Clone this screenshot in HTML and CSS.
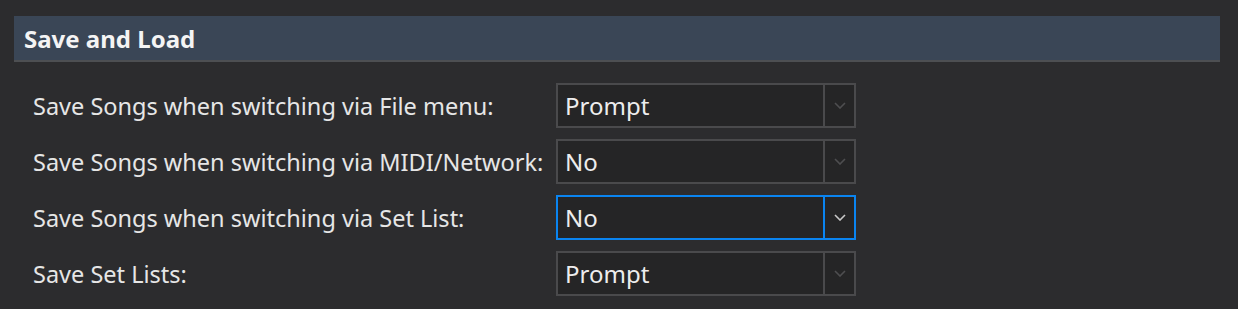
FILE: index.html
```html
<!DOCTYPE html>
<html lang="en">
  <head>
    <meta charset="UTF-8" />
    <meta name="viewport" content="width=device-width, initial-scale=1.0" />
    <title>Save and Load</title>
    <link rel="stylesheet" href="styles.css">
  </head>
  <body>
    <div class="panel">
      <h2 class="section-title">Save and Load</h2>

      <div class="options">
        <label class="option-label">Save Songs when switching via File menu:</label>
        <div class="dropdown">
          <span class="dropdown-value">Prompt</span>
          <span class="dropdown-arrow">
            <svg width="12" height="7" viewBox="0 0 12 7"><path d="M1 1l5 5 5-5" fill="none" stroke="currentColor" stroke-width="1.6"/></svg>
          </span>
        </div>

        <label class="option-label">Save Songs when switching via MIDI/Network:</label>
        <div class="dropdown">
          <span class="dropdown-value">No</span>
          <span class="dropdown-arrow">
            <svg width="12" height="7" viewBox="0 0 12 7"><path d="M1 1l5 5 5-5" fill="none" stroke="currentColor" stroke-width="1.6"/></svg>
          </span>
        </div>

        <label class="option-label">Save Songs when switching via Set List:</label>
        <div class="dropdown focused">
          <span class="dropdown-value">No</span>
          <span class="dropdown-arrow">
            <svg width="12" height="7" viewBox="0 0 12 7"><path d="M1 1l5 5 5-5" fill="none" stroke="currentColor" stroke-width="1.6"/></svg>
          </span>
        </div>

        <label class="option-label">Save Set Lists:</label>
        <div class="dropdown">
          <span class="dropdown-value">Prompt</span>
          <span class="dropdown-arrow">
            <svg width="12" height="7" viewBox="0 0 12 7"><path d="M1 1l5 5 5-5" fill="none" stroke="currentColor" stroke-width="1.6"/></svg>
          </span>
        </div>
      </div>
    </div>
  </body>
</html>
```

FILE: styles.css
```css
body {
  margin: 0;
  background-color: #2c2c2e;
  font-family: "Noto Sans", sans-serif;
  color: #e8e8e8;
}

.panel {
  padding: 16px 18px 0 14px;
}

.section-title {
  margin: 0;
  height: 44px;
  padding-left: 10px;
  display: flex;
  align-items: center;
  background-color: #3a4656;
  border-bottom: 2px solid #4d4f52;
  font-size: 24px;
  font-weight: bold;
  color: #f4f4f4;
}

.options {
  display: grid;
  grid-template-columns: 523px 300px;
  grid-auto-rows: 45px;
  row-gap: 11px;
  padding: 21px 0 0 19px;
  align-items: center;
}

.option-label {
  font-size: 23.5px;
  color: #e6e6e6;
}

.dropdown {
  display: flex;
  height: 45px;
  box-sizing: border-box;
  border: 2px solid #4a4a4c;
  background-color: #252526;
}

.dropdown-value {
  flex-grow: 1;
  display: flex;
  align-items: center;
  padding-left: 7px;
  font-size: 24px;
  color: #ededed;
  border-right: 2px solid #4a4a4c;
}

.dropdown-arrow {
  width: 29px;
  display: flex;
  align-items: center;
  justify-content: center;
  color: #4e4e50;
}

.dropdown.focused {
  border-color: #0a84f0;
}

.dropdown.focused .dropdown-value {
  border-right-color: #0a84f0;
}

.dropdown.focused .dropdown-arrow {
  color: #c8c8c8;
}
```
